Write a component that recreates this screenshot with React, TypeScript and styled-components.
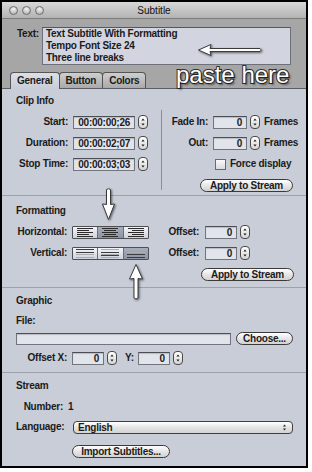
import React from "react";
import styled, { createGlobalStyle, css } from "styled-components";

const GlobalStyle = createGlobalStyle`
  html, body { margin: 0; padding: 0; background: #fff; }
  body {
    font-family: "Liberation Sans", Arial, sans-serif;
    font-size: 10px;
    letter-spacing: -0.25px;
    color: #1b1b1b;
  }
  * { box-sizing: border-box; }
`;

const Window = styled.div`
  position: relative;
  width: 308px;
  height: 468px;
  border: 2px solid #000;
  background: #a6a6a6;
  display: flex;
  flex-direction: column;
  overflow: hidden;
`;

const TitleBar = styled.div`
  flex: none;
  height: 17px;
  display: grid;
  grid-template-columns: 1fr auto 1fr;
  align-items: center;
  padding: 1px 7px 0;
  background: linear-gradient(#d8d8d8, #b3b3b3);
  border-bottom: 1px solid #7c7c7c;
`;

const Lights = styled.div`
  display: flex;
  gap: 4px;
`;

const Light = styled.span`
  width: 9px;
  height: 9px;
  border-radius: 50%;
  border: 1px solid #6d6d6d;
  background: radial-gradient(circle at 50% 30%, #f4f4f4, #bdbdbd 70%);
`;

const Title = styled.div`
  font-size: 10px;
  letter-spacing: 0;
  color: #111;
`;

const TopArea = styled.div`
  flex: none;
  padding: 8px 12px 0 6px;
  background: #a6a6a6;
`;

const TextRow = styled.div`
  display: flex;
  align-items: flex-start;
  padding-left: 9px;
`;

const TextLabel = styled.div`
  font-weight: bold;
  line-height: 12px;
  margin-top: 1px;
  margin-right: 3px;
`;

const TextBox = styled.div`
  width: 249px;
  height: 38px;
  border: 1px solid #6e7079;
  border-top-color: #55575e;
  background: #d2d5df;
  padding: 0 3px;
  font-weight: bold;
  line-height: 12px;
`;

const TabBar = styled.div`
  display: flex;
  align-items: flex-end;
  margin-top: 7px;
  height: 16px;
  padding-left: 2px;
`;

const Tab = styled.div<{ $active?: boolean }>`
  height: 16px;
  padding: 0 6px;
  margin-right: -1px;
  border: 1px solid #555;
  border-bottom: none;
  border-radius: 4px 4px 0 0;
  font-weight: bold;
  line-height: 16px;
  background: linear-gradient(#cfcfcf, #a9a9a9);
  ${(p) =>
    p.$active &&
    css`
      position: relative;
      z-index: 1;
      height: 17px;
      margin-bottom: -1px;
      background: linear-gradient(#dcdfe6, #c9cdd7);
    `}
`;

const Panel = styled.div`
  flex: 1;
  display: flex;
  flex-direction: column;
  background: #c9cdd7;
  border-top: 1px solid #5b5e66;
`;

const Section = styled.div<{ $pt: number; $pb: number; $grow?: boolean }>`
  padding: ${(p) => p.$pt}px 12px ${(p) => p.$pb}px 14px;
  & + & {
    border-top: 1px solid #9da1ab;
  }
  ${(p) => p.$grow && css`flex: 1;`}
`;

const Heading = styled.div`
  font-weight: bold;
  line-height: 12px;
  height: 12px;
`;

const Column = styled.div<{ $gap?: number; $mt?: number; $w?: number }>`
  display: flex;
  flex-direction: column;
  gap: ${(p) => p.$gap ?? 7}px;
  margin-top: ${(p) => p.$mt ?? 0}px;
  ${(p) => p.$w && css`width: ${p.$w}px; flex: none;`}
`;

const Row = styled.div<{ $mt?: number; $h?: number; $indent?: number; $end?: boolean }>`
  display: flex;
  align-items: center;
  height: ${(p) => p.$h ?? 14}px;
  margin-top: ${(p) => p.$mt ?? 0}px;
  padding-left: ${(p) => p.$indent ?? 0}px;
  ${(p) => p.$end && css`justify-content: flex-end;`}
`;

const Label = styled.div<{ $w?: number; $mr?: number; $ml?: number }>`
  font-weight: bold;
  line-height: 12px;
  text-align: right;
  white-space: nowrap;
  flex: none;
  ${(p) => p.$w && css`width: ${p.$w}px;`}
  margin-right: ${(p) => p.$mr ?? 5}px;
  margin-left: ${(p) => p.$ml ?? 0}px;
`;

const Plain = styled.div`
  font-weight: bold;
  line-height: 12px;
  white-space: nowrap;
`;

const Field = styled.div<{ $w: number; $h?: number }>`
  flex: none;
  width: ${(p) => p.$w}px;
  height: ${(p) => p.$h ?? 13}px;
  border: 1px solid #72757d;
  border-top-color: #4b4e55;
  background: #e2e4eb;
  box-shadow: inset 0 1px 1px rgba(0, 0, 0, 0.18);
  padding: 0 4px;
  font-weight: bold;
  line-height: 11px;
  text-align: right;
`;

const StepperBox = styled.div`
  flex: none;
  width: 10px;
  height: 14px;
  margin-left: 3px;
  border: 1px solid #4a4a4a;
  border-radius: 4px;
  background: linear-gradient(#ffffff, #d4d4d4);
  display: flex;
  align-items: center;
  justify-content: center;
`;

const Stepper = () => (
  <StepperBox>
    <svg width="8" height="12" viewBox="0 0 8 12">
      <path d="M2.4 4.6 L4 2.6 L5.6 4.6Z M2.4 7.4 L5.6 7.4 L4 9.4Z" fill="#1e1e1e" />
    </svg>
  </StepperBox>
);

const Unit = styled.div`
  font-weight: bold;
  margin-left: 4px;
  line-height: 12px;
`;

const Divider = styled.div`
  flex: none;
  width: 1px;
  height: 80px;
  margin: -5px 0 0 13px;
  background: #8a8e97;
`;

const ClipBody = styled.div`
  display: flex;
  align-items: flex-start;
  margin-top: 8px;
`;

const Checkbox = styled.div`
  flex: none;
  width: 11px;
  height: 11px;
  border: 1px solid #6a6a6a;
  background: linear-gradient(#fafafa, #dadada);
  margin-right: 4px;
`;

const PillButton = styled.div<{ $w: number; $ml?: number }>`
  flex: none;
  width: ${(p) => p.$w}px;
  height: 13px;
  margin-left: ${(p) => p.$ml ?? 0}px;
  border: 1px solid #3a3a3a;
  border-radius: 7px;
  background: linear-gradient(#ffffff, #e6e6e6 50%, #d2d2d2);
  font-weight: bold;
  line-height: 11px;
  text-align: center;
  white-space: nowrap;
`;

const Segmented = styled.div`
  flex: none;
  display: flex;
  width: 77px;
  height: 13px;
  border: 1px solid #4d4f55;
  border-radius: 1px;
  overflow: hidden;
`;

const Segment = styled.div<{ $on?: boolean }>`
  flex: 1;
  display: flex;
  align-items: center;
  justify-content: center;
  background: linear-gradient(#f3f4f7, #cfd2da);
  & + & {
    border-left: 1px solid #6b6e75;
  }
  ${(p) =>
    p.$on &&
    css`
      background: linear-gradient(#a9aebb, #8c93a2);
    `}
`;

const Popup = styled.div<{ $w: number }>`
  flex: none;
  width: ${(p) => p.$w}px;
  height: 13px;
  border: 1px solid #3f3f3f;
  border-radius: 4px;
  background: linear-gradient(#ffffff, #e4e4e4 50%, #d3d3d3);
  display: flex;
  align-items: center;
  justify-content: space-between;
  padding: 0 5px 0 4px;
  font-weight: bold;
  line-height: 11px;
`;

const Overlay = styled.div<{ $l: number; $t: number }>`
  position: absolute;
  left: ${(p) => p.$l}px;
  top: ${(p) => p.$t}px;
  z-index: 5;
  pointer-events: none;
  line-height: 0;
  filter: drop-shadow(1px 1px 1px rgba(0, 0, 0, 0.55));
`;

const PasteHere = styled.div`
  position: absolute;
  left: 174px;
  top: 61px;
  z-index: 5;
  font-family: "Liberation Sans", Arial, sans-serif;
  font-size: 24px;
  line-height: 24px;
  letter-spacing: 0;
  color: #fff;
  -webkit-text-stroke: 2px #2e2e2e;
  paint-order: stroke fill;
  text-shadow: 2px 2px 2px rgba(0, 0, 0, 0.5);
  white-space: nowrap;
`;

const HLines = ({ align }: { align: "l" | "c" | "r" }) => {
  const lens = [16, 12, 16, 12, 16];
  return (
    <svg width="22" height="11" viewBox="0 0 22 11">
      {lens.map((len, i) => {
        const x = align === "l" ? 3 : align === "r" ? 19 - len : 11 - len / 2;
        return <rect key={i} x={x} y={1 + i * 2} width={len} height={1} fill="#2b2b2b" />;
      })}
    </svg>
  );
};

const VLines = ({ pos }: { pos: 0 | 1 | 2 }) => {
  const dark = pos === 0 ? [1, 4] : pos === 1 ? [4, 7] : [6, 9];
  const light = [1, 4, 6, 9].filter((y) => !dark.includes(y));
  return (
    <svg width="22" height="11" viewBox="0 0 22 11">
      {light.map((y) => (
        <rect key={"l" + y} x={2} y={y} width={18} height={1} fill="#a9acb3" />
      ))}
      {dark.map((y) => (
        <rect key={"d" + y} x={2} y={y} width={18} height={1} fill="#3a3c42" />
      ))}
    </svg>
  );
};

const ArrowStroke = "#3a3a3a";

export default function App() {
  return (
    <>
      <GlobalStyle />
      <Window>
        <TitleBar>
          <Lights>
            <Light />
            <Light />
            <Light />
          </Lights>
          <Title>Subtitle</Title>
          <span />
        </TitleBar>

        <TopArea>
          <TextRow>
            <TextLabel>Text:</TextLabel>
            <TextBox>
              <div>Text Subtitle With Formatting</div>
              <div>Tempo Font Size 24</div>
              <div>Three line breaks</div>
            </TextBox>
          </TextRow>
          <TabBar>
            <Tab $active>General</Tab>
            <Tab>Button</Tab>
            <Tab>Colors</Tab>
          </TabBar>
        </TopArea>

        <Panel>
          <Section $pt={6} $pb={3}>
            <Heading>Clip Info</Heading>
            <ClipBody>
              <Column $w={132}>
                <Row>
                  <Label $w={52}>Start:</Label>
                  <Field $w={62}>00:00:00;26</Field>
                  <Stepper />
                </Row>
                <Row>
                  <Label $w={52}>Duration:</Label>
                  <Field $w={62}>00:00:02;07</Field>
                  <Stepper />
                </Row>
                <Row>
                  <Label $w={52}>Stop Time:</Label>
                  <Field $w={62}>00:00:03;03</Field>
                  <Stepper />
                </Row>
              </Column>
              <Divider />
              <Column>
                <Row>
                  <Label $w={46}>Fade In:</Label>
                  <Field $w={34}>0</Field>
                  <Stepper />
                  <Unit>Frames</Unit>
                </Row>
                <Row>
                  <Label $w={46}>Out:</Label>
                  <Field $w={34}>0</Field>
                  <Stepper />
                  <Unit>Frames</Unit>
                </Row>
                <Row $indent={53}>
                  <Checkbox />
                  <Plain>Force display</Plain>
                </Row>
                <Row $indent={38}>
                  <PillButton $w={93}>Apply to Stream</PillButton>
                </Row>
              </Column>
            </ClipBody>
          </Section>

          <Section $pt={9} $pb={6}>
            <Heading>Formatting</Heading>
            <Column $mt={8}>
              <Row>
                <Label $w={51}>Horizontal:</Label>
                <Segmented>
                  <Segment>
                    <HLines align="l" />
                  </Segment>
                  <Segment $on>
                    <HLines align="c" />
                  </Segment>
                  <Segment>
                    <HLines align="r" />
                  </Segment>
                </Segmented>
                <Label $w={44} $ml={6} $mr={6}>
                  Offset:
                </Label>
                <Field $w={32}>0</Field>
                <Stepper />
              </Row>
              <Row>
                <Label $w={51}>Vertical:</Label>
                <Segmented>
                  <Segment>
                    <VLines pos={0} />
                  </Segment>
                  <Segment>
                    <VLines pos={1} />
                  </Segment>
                  <Segment $on>
                    <VLines pos={2} />
                  </Segment>
                </Segmented>
                <Label $w={44} $ml={6} $mr={6}>
                  Offset:
                </Label>
                <Field $w={32}>0</Field>
                <Stepper />
              </Row>
              <Row $end>
                <PillButton $w={93}>Apply to Stream</PillButton>
              </Row>
            </Column>
          </Section>

          <Section $pt={7} $pb={7}>
            <Heading>Graphic</Heading>
            <Row $mt={8} $h={12}>
              <Plain>File:</Plain>
            </Row>
            <Row $mt={5} $h={13}>
              <Field $w={215} $h={12} />
              <PillButton $w={57} $ml={5}>
                Choose...
              </PillButton>
            </Row>
            <Row $mt={6}>
              <Label $w={51}>Offset X:</Label>
              <Field $w={32}>0</Field>
              <Stepper />
              <Label $ml={8} $mr={4}>
                Y:
              </Label>
              <Field $w={32}>0</Field>
              <Stepper />
            </Row>
          </Section>

          <Section $pt={7} $pb={0} $grow>
            <Heading>Stream</Heading>
            <Row $mt={9} $h={12}>
              <Label $w={47}>Number:</Label>
              <Plain>1</Plain>
            </Row>
            <Row $mt={7}>
              <Label $w={47} $mr={10}>
                Language:
              </Label>
              <Popup $w={220}>
                <span>English</span>
                <svg width="5" height="9" viewBox="0 0 5 9">
                  <path d="M1 3.5 L2.5 1.5 L4 3.5Z M1 5.5 L4 5.5 L2.5 7.5Z" fill="#222" />
                </svg>
              </Popup>
            </Row>
            <Row $mt={10}>
              <PillButton $w={98} $ml={56}>
                Import Subtitles...
              </PillButton>
            </Row>
          </Section>
        </Panel>

        <Overlay $l={195} $t={41}>
          <svg width="68" height="14" viewBox="0 0 68 14">
            <path
              d="M1.5 7 L14 1.5 L13 5.5 L63 5.5 Q65.5 7 63 8.5 L13 8.5 L14 12.5 Z"
              fill="#fff"
              stroke={ArrowStroke}
              strokeWidth="1"
              strokeLinejoin="round"
            />
          </svg>
        </Overlay>

        <Overlay $l={99} $t={186}>
          <svg width="15" height="33" viewBox="0 0 15 33">
            <path
              d="M5.5 1.5 Q7.5 0 9.5 1.5 L9.5 16.5 L13.5 16 L7.5 31.5 L1.5 16 L5.5 16.5 Z"
              fill="#fff"
              stroke={ArrowStroke}
              strokeWidth="1"
              strokeLinejoin="round"
            />
          </svg>
        </Overlay>

        <Overlay $l={126} $t={261}>
          <svg width="16" height="38" viewBox="0 0 16 38">
            <path
              d="M8 1.5 L14.5 16 L10 15.5 L10 35 Q8 37 6 35 L6 15.5 L1.5 16 Z"
              fill="#fff"
              stroke={ArrowStroke}
              strokeWidth="1"
              strokeLinejoin="round"
            />
          </svg>
        </Overlay>

        <PasteHere>paste here</PasteHere>
      </Window>
    </>
  );
}
